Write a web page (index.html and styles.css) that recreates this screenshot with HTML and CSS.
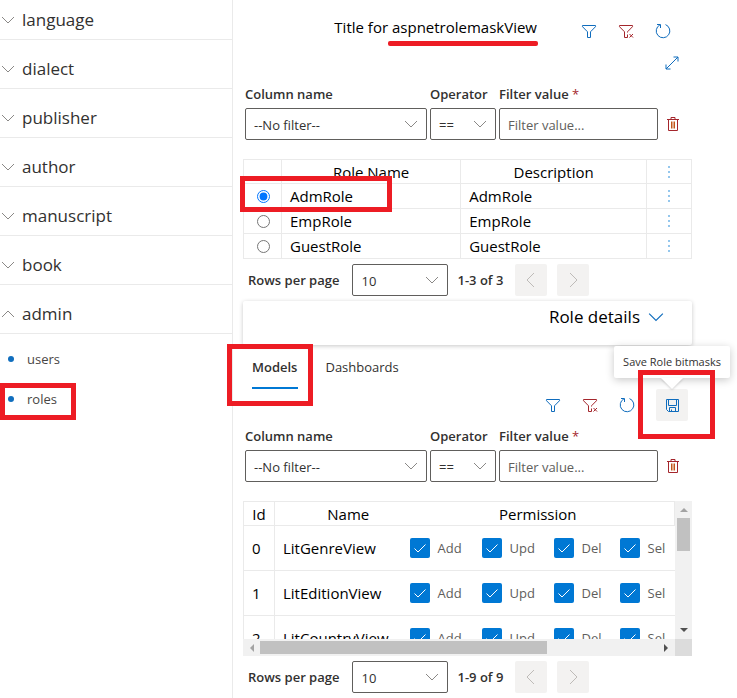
FILE: index.html
```html
<!DOCTYPE html>
<html lang="en">
<head>
<meta charset="utf-8">
<meta name="viewport" content="width=device-width, initial-scale=1">
<title>Roles</title>
<link rel="stylesheet" href="styles.css">
</head>
<body>
<svg class="sprite" aria-hidden="true">
  <symbol id="down" viewBox="0 0 14 14"><path d="M1 4l6 6 6-6"/></symbol>
  <symbol id="up" viewBox="0 0 14 14"><path d="M1 10l6-6 6 6"/></symbol>
  <symbol id="left" viewBox="0 0 14 14"><path d="M10 0L3 7l7 7"/></symbol>
  <symbol id="right" viewBox="0 0 14 14"><path d="M4 0l7 7-7 7"/></symbol>
  <symbol id="filter" viewBox="0 0 16 16"><path d="M1.500 2.500h13v1.200L9.500 8.800v5.700h-3V8.800L1.500 3.700z"/></symbol>
  <symbol id="clear" viewBox="0 0 16 16"><path d="M9.500 9.500V8.800l5-5.100V2.500h-13v1.200l5 5.100v5.700h3v-3M11.500 11l3.500 3.500M15 11l-3.500 3.500"/></symbol>
  <symbol id="refresh" viewBox="0 0 16 16"><path d="M10.500 1.600a6.800 6.800 0 1 1-5.600.3M2 1.500h3.500V5"/></symbol>
  <symbol id="expand" viewBox="0 0 16 16"><path d="M2 14L14 2M9.500 2H14v4.500M2 9.500V14h4.500"/></symbol>
  <symbol id="trash" viewBox="0 0 16 16"><path d="M2 3.500h12M6 3.500v-2h4v2M3.500 3.500v11h9v-11"/><path class="slats" d="M6.500 5.500v7M8 5.500v7M9.500 5.500v7"/></symbol>
  <symbol id="save" viewBox="0 0 16 16"><path d="M2.500 2.500h12v12h-10l-2-2zM4.500 2.500v6h8v-6M5.500 14.500v-4h6v4M7.500 12.500v2"/></symbol>
  <symbol id="check" viewBox="0 0 14 14"><path d="M1.500 7.500L5 11l7.500-7.500"/></symbol>
  <symbol id="more" viewBox="0 0 14 14"><path d="M7 2v2M7 7v2M7 12v2" transform="translate(0 -1)"/></symbol>
</svg>
<div class="app">
  <nav class="side">
    <button class="group"><svg><use href="#down"/></svg>language</button>
    <button class="group"><svg><use href="#down"/></svg>dialect</button>
    <button class="group"><svg><use href="#down"/></svg>publisher</button>
    <button class="group"><svg><use href="#down"/></svg>author</button>
    <button class="group"><svg><use href="#down"/></svg>manuscript</button>
    <button class="group"><svg><use href="#down"/></svg>book</button>
    <button class="group" aria-expanded="true"><svg><use href="#up"/></svg>admin</button>
    <ul class="links">
      <li><a href="#users">users</a></li>
      <li><a href="#roles">roles</a><span class="mark mark-link"></span></li>
    </ul>
  </nav>
  <main class="main">
    <header class="head">
      <div class="head-row">
        <h1>Title for <span class="marked">aspnetrolemaskView</span></h1>
        <div class="tools">
          <button class="icon" aria-label="Filter"><svg><use href="#filter"/></svg></button>
          <button class="icon red" aria-label="Clear filter"><svg><use href="#clear"/></svg></button>
          <button class="icon" aria-label="Refresh"><svg><use href="#refresh"/></svg></button>
        </div>
      </div>
      <div class="head-row second">
        <button class="icon" aria-label="Expand"><svg><use href="#expand"/></svg></button>
      </div>
    </header>

    <form class="filter">
      <div class="field column"><label for="c1">Column name</label><div class="select"><select id="c1"><option>--No filter--</option></select><svg><use href="#down"/></svg></div></div>
      <div class="field operator"><label for="o1">Operator</label><div class="select"><select id="o1"><option>==</option></select><svg><use href="#down"/></svg></div></div>
      <div class="field value"><label for="v1">Filter value <i>*</i></label><input id="v1" type="text" placeholder="Filter value..."></div>
      <button type="button" class="icon red" aria-label="Delete filter"><svg><use href="#trash"/></svg></button>
    </form>

    <table class="roles">
      <colgroup><col class="pick"><col class="name"><col class="desc"><col class="more"></colgroup>
      <thead><tr><th></th><th>Role Name</th><th>Description</th><th><button class="dots" aria-label="Menu"><svg><use href="#more"/></svg></button></th></tr></thead>
      <tbody>
        <tr><td><input type="radio" name="role" aria-label="AdmRole" checked><span class="mark mark-row"></span></td><td>AdmRole</td><td>AdmRole</td><td><button class="dots" aria-label="Menu"><svg><use href="#more"/></svg></button></td></tr>
        <tr><td><input type="radio" name="role" aria-label="EmpRole"></td><td>EmpRole</td><td>EmpRole</td><td><button class="dots" aria-label="Menu"><svg><use href="#more"/></svg></button></td></tr>
        <tr><td><input type="radio" name="role" aria-label="GuestRole"></td><td>GuestRole</td><td>GuestRole</td><td><button class="dots" aria-label="Menu"><svg><use href="#more"/></svg></button></td></tr>
      </tbody>
    </table>

    <div class="pager">
      <label for="p1">Rows per page</label>
      <div class="select"><select id="p1"><option>10</option></select><svg><use href="#down"/></svg></div>
      <span class="range">1-3 of 3</span>
      <button class="page" disabled aria-label="Previous"><svg><use href="#left"/></svg></button>
      <button class="page" disabled aria-label="Next"><svg><use href="#right"/></svg></button>
    </div>

    <section class="details">
      <h2>Role details</h2>
      <button class="icon" aria-label="Toggle details"><svg><use href="#down"/></svg></button>
    </section>

    <div class="tabs" role="tablist">
      <button class="tab active" role="tab" aria-selected="true">Models<span class="mark mark-tab"></span></button>
      <button class="tab" role="tab">Dashboards</button>
    </div>

    <div class="tools detail-tools">
      <button class="icon" aria-label="Filter"><svg><use href="#filter"/></svg></button>
      <button class="icon red" aria-label="Clear filter"><svg><use href="#clear"/></svg></button>
      <button class="icon" aria-label="Refresh"><svg><use href="#refresh"/></svg></button>
      <div class="save">
        <button class="icon hover" aria-describedby="tip"><svg><use href="#save"/></svg></button>
        <div class="tip" role="tooltip" id="tip">Save Role bitmasks</div>
        <span class="mark mark-save"></span>
      </div>
    </div>

    <form class="filter">
      <div class="field column"><label for="c2">Column name</label><div class="select"><select id="c2"><option>--No filter--</option></select><svg><use href="#down"/></svg></div></div>
      <div class="field operator"><label for="o2">Operator</label><div class="select"><select id="o2"><option>==</option></select><svg><use href="#down"/></svg></div></div>
      <div class="field value"><label for="v2">Filter value <i>*</i></label><input id="v2" type="text" placeholder="Filter value..."></div>
      <button type="button" class="icon red" aria-label="Delete filter"><svg><use href="#trash"/></svg></button>
    </form>

    <div class="scroller">
      <div class="viewport">
        <table class="models">
          <colgroup><col class="id"><col class="model"><col></colgroup>
          <thead><tr><th>Id</th><th>Name</th><th>Permission</th></tr></thead>
          <tbody>
            <tr><td>0</td><td>LitGenreView</td><td><div class="perms">
              <label><input type="checkbox" checked><svg><use href="#check"/></svg>Add</label>
              <label><input type="checkbox" checked><svg><use href="#check"/></svg>Upd</label>
              <label><input type="checkbox" checked><svg><use href="#check"/></svg>Del</label>
              <label><input type="checkbox" checked><svg><use href="#check"/></svg>Sel</label></div></td></tr>
            <tr><td>1</td><td>LitEditionView</td><td><div class="perms">
              <label><input type="checkbox" checked><svg><use href="#check"/></svg>Add</label>
              <label><input type="checkbox" checked><svg><use href="#check"/></svg>Upd</label>
              <label><input type="checkbox" checked><svg><use href="#check"/></svg>Del</label>
              <label><input type="checkbox" checked><svg><use href="#check"/></svg>Sel</label></div></td></tr>
            <tr><td>2</td><td>LitCountryView</td><td><div class="perms">
              <label><input type="checkbox" checked><svg><use href="#check"/></svg>Add</label>
              <label><input type="checkbox" checked><svg><use href="#check"/></svg>Upd</label>
              <label><input type="checkbox" checked><svg><use href="#check"/></svg>Del</label>
              <label><input type="checkbox" checked><svg><use href="#check"/></svg>Sel</label></div></td></tr>
          </tbody>
        </table>
      </div>
      <div class="bar vertical"><i class="arrow north"></i><i class="thumb"></i><i class="arrow south"></i></div>
      <div class="bar horizontal"><i class="arrow west"></i><i class="track"><i class="thumb"></i></i><i class="arrow east"></i></div>
      <div class="corner"></div>
    </div>

    <div class="pager">
      <label for="p2">Rows per page</label>
      <div class="select"><select id="p2"><option>10</option></select><svg><use href="#down"/></svg></div>
      <span class="range">1-9 of 9</span>
      <button class="page" disabled aria-label="Previous"><svg><use href="#left"/></svg></button>
      <button class="page" disabled aria-label="Next"><svg><use href="#right"/></svg></button>
    </div>
  </main>
</div>
</body>
</html>
```
FILE: styles.css
```css
* { box-sizing: border-box; }
body {
  margin: 0;
  background: #fff;
  color: #000;
  font: 15px/20px "Open Sans", "Noto Sans", sans-serif;
  overflow: hidden;
}
button, input, select { font: inherit; color: inherit; margin: 0; }
button { border: 0; background: none; padding: 0; }
h1, h2 { margin: 0; font-weight: 400; }
svg { width: 14px; height: 14px; fill: none; stroke: currentColor; stroke-width: 1; flex: none; }
.sprite { position: absolute; width: 0; height: 0; }
.slats { stroke: #c2571a; }
.app { display: flex; min-height: 100vh; }

/* Red highlight frames */
.mark { position: absolute; border: 5px solid #ed1c24; pointer-events: none; z-index: 3; }
.mark-link { left: 0; top: 4px; width: 76px; height: 37px; }
.mark-row { left: -4px; top: -8px; width: 152px; height: 36px; }
.mark-tab { left: -16px; top: -1px; width: 86px; height: 62px; }
.mark-save { left: -18px; top: -19px; width: 77px; height: 69px; }

/* Sidebar */
.side { flex: none; width: 233px; border-right: 1px solid #eaeaea; margin-top: -9px; }
.group {
  display: flex;
  align-items: center;
  gap: 7px;
  width: 100%;
  height: 49px;
  padding: 9px 1px 0;
  border-bottom: 1px solid #eaeaea;
  color: #323130;
  font-size: 17px;
}
.group svg { color: #8a8886; }
.links { list-style: none; margin: 0; padding: 5px 0; }
.links li { position: relative; }
.links a {
  display: flex;
  align-items: center;
  gap: 13px;
  height: 40px;
  padding-left: 8px;
  color: #484644;
  font-size: 13px;
  text-decoration: none;
}
.links a::before { content: ""; width: 6px; height: 6px; border-radius: 50%; background: #106ebe; }

/* Main */
.main { flex: 1; min-width: 0; padding: 0 45px 0 10px; }
.head { padding-top: 15px; height: 84px; }
.head-row { display: flex; justify-content: flex-end; padding-right: 13px; gap: 36px; }
.head-row.second { padding-right: 4px; }
.head h1 { font-size: 15px; line-height: 24px; }
.marked { position: relative; }
.marked::after {
  content: "";
  position: absolute;
  left: -4px;
  right: -1px;
  top: 24px;
  height: 5px;
  border-radius: 2px;
  background: #ed1c24;
}
.tools { display: flex; gap: 5px; }
.icon { display: flex; align-items: center; justify-content: center; width: 32px; height: 32px; color: #0f6cbd; border-radius: 2px; }
.icon svg { width: 16px; height: 16px; }
.icon.red { color: #a4262c; }
.icon.hover { background: #f3f2f1; }
.detail-tools { justify-content: flex-end; padding-right: 4px; margin-bottom: 5px; }
.save { position: relative; margin-left: 8px; }
.tip {
  position: absolute;
  right: -42px;
  bottom: 43px;
  padding: 6px 9px;
  background: #fff;
  border-radius: 2px;
  box-shadow: 0 2px 8px rgba(0, 0, 0, .22);
  color: #323130;
  font-size: 11px;
  white-space: nowrap;
  z-index: 2;
}
.tip::after {
  content: "";
  position: absolute;
  right: 47px;
  top: 100%;
  border: 11px solid transparent;
  border-top-color: #fff;
  border-bottom: 0;
  filter: drop-shadow(0 1px 1px rgba(0, 0, 0, .18));
}

.filter { display: flex; gap: 3px; align-items: flex-end; padding: 0 3px 0 2px; }
.field { min-width: 0; color: #323130; font-size: 13px; }
.field label, .pager label, .range { font-weight: 600; font-size: 13px; color: #323130; white-space: nowrap; }
.field label { display: block; padding-bottom: 4px; }
.field i { color: #a4262c; font-style: normal; font-weight: 400; }
.column { flex: 182 1 0; }
.operator { flex: 66 1 0; }
.value { flex: 159 1 0; }
.filter .icon { flex: none; margin-left: -4px; }
.field input, .select select {
  display: block;
  width: 100%;
  height: 32px;
  padding: 2px 8px 0;
  border: 1px solid #605e5c;
  border-radius: 2px;
  background: #fff;
  color: #323130;
  font-size: 13px;
  appearance: none;
}
.field input::placeholder { color: #605e5c; opacity: 1; }
.select { position: relative; }
.select svg { position: absolute; right: 9px; top: 9px; color: #8a8886; pointer-events: none; }

table { border-collapse: collapse; table-layout: fixed; width: 100%; }
th, td { border: 1px solid #eaeaea; font-weight: 400; padding: 0 8px; text-align: left; }
th { text-align: center; }
.roles { margin-top: 19px; }
.roles td { height: 25px; line-height: 20px; }
.roles th { height: 24px; line-height: 20px; }
.roles td:first-child { position: relative; padding: 0 13px; }
.roles input { display: block; width: 13px; height: 13px; }
.roles th:last-child, .roles td:last-child { padding: 0; }
.pick { width: 38px; }
.name { width: 40%; }
.more { width: 45px; }
.dots { display: flex; justify-content: center; align-items: center; width: 100%; height: 20px; color: #2b8fdb; }
.dots svg { stroke-dasharray: 2; }

.pager { display: flex; align-items: center; padding: 5px; height: 42px; }
.pager .select { width: 96px; margin: 0 9px 0 13px; }
.range { margin-right: 12px; }
.page { display: flex; align-items: center; justify-content: center; width: 32px; height: 32px; margin-right: 10px; border-radius: 2px; background: #f3f2f1; color: #bebbb8; }

.details {
  display: flex;
  justify-content: flex-end;
  height: 44px;
  padding-right: 20px;
  border-radius: 2px;
  box-shadow: 0 1px 4px rgba(0, 0, 0, .22);
}
.details h2 { font-size: 17px; line-height: 32px; }
.details .icon svg { width: 16px; height: 16px; }
.tabs { display: flex; }
.tab { position: relative; height: 44px; padding: 0 9px; margin-right: 10px; font-size: 13px; color: #323130; }
.tab.active { font-weight: 600; }
.tab.active::after { content: ""; position: absolute; left: 9px; right: 8px; bottom: 0; height: 2px; background: #0078d4; }

/* Scrolling model grid */
.scroller { display: grid; grid-template: 138px 17px / 1fr 17px; margin-top: 19px; }
.viewport { overflow: hidden; }
.id { width: 31px; }
.model { width: 127px; }
.models th { height: 24px; line-height: 20px; }
.models td { height: 45px; }
.models th:nth-child(2) { padding-left: 28px; }
.models th:nth-child(3), .models td:nth-child(3) { border-left: 0; }
.models th:nth-child(2), .models td:nth-child(2) { border-right: 0; }
.models td:nth-child(3) { padding-right: 0; border-right: 0; }
.perms { display: grid; grid-template-columns: 72px 72px 66px 1fr; }
.perms label { position: relative; display: flex; align-items: center; gap: 8px; color: #605e5c; font-size: 13px; }
.perms input { appearance: none; width: 20px; height: 20px; border-radius: 2px; background: #0078d4; flex: none; }
.perms svg { position: absolute; left: 3px; top: 3px; color: #fff; }
.bar { display: flex; align-items: center; background: #f1f1f1; }
.vertical { flex-direction: column; }
.thumb { display: block; background: #c1c1c1; }
.vertical .thumb { width: 13px; height: 33px; margin-bottom: auto; }
.track { flex: 1; }
.horizontal .thumb { width: 72%; height: 13px; }
.arrow { border: 4px solid transparent; }
.north { margin: 3px 0 6px; border-bottom-color: #a3a3a3; }
.south { margin-bottom: 3px; border-top-color: #505050; }
.west { margin: 0 6px 0 3px; border-right-color: #a3a3a3; }
.east { margin: 0 3px 0 6px; border-left-color: #505050; }
.corner { background: #dcdcdc; }
```
